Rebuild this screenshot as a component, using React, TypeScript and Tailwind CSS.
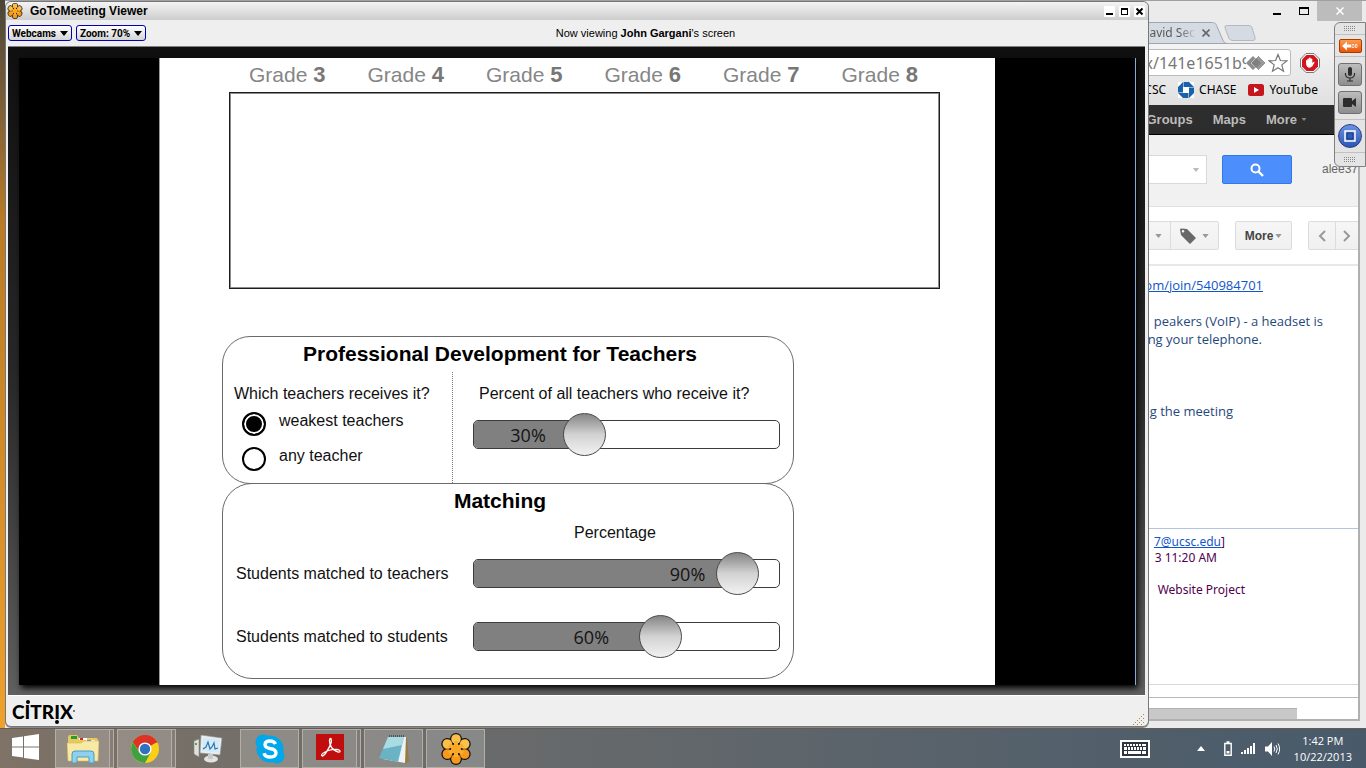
import React from 'react';

const body = 'font-["Liberation_Sans",Arial,sans-serif]';

function Flower({ className }: { className: string }) {
  const petals = [0, 60, 120, 180, 240, 300];
  return (
    <svg viewBox="-16 -16 32 32" className={className} aria-hidden="true">
      {petals.map((a) => (
        <g key={a} transform={`rotate(${a})`}>
          <circle cx="0" cy="-10" r="6" fill="#15110c" />
          <path d="M-4 -9h8v9h-8z" fill="#15110c" />
        </g>
      ))}
      {petals.map((a) => (
        <g key={a} transform={`rotate(${a})`}>
          <circle cx="0" cy="-10" r="4.800" fill={a > 60 && a < 300 ? '#f7991c' : '#fbc04a'} />
          <path d="M-2 -8h4v5h-4z" fill="#f9ac30" />
        </g>
      ))}
      <circle r="4.800" fill="#f8a826" />
    </svg>
  );
}

function Caret({ className }: { className: string }) {
  return (
    <svg viewBox="0 0 8 5" className={className} aria-hidden="true">
      <path d="M0 0h8L4 5z" fill="currentColor" />
    </svg>
  );
}

function Slider({ label, value, fill, fillClass }: { label: string; value: number; fill: number; fillClass: string }) {
  return (
    <div className="relative h-[29px] w-[307px] shrink-0 rounded-[5px] border border-[#3c3c3c] bg-white">
      <div
        className={`flex h-full items-center justify-end rounded-l-[4px] bg-[#808080] font-["Open_Sans",sans-serif] text-[18px] leading-none text-[#141414] ${fillClass}`}
        style={{ width: `${fill}%` }}
      >
        {value}%
      </div>
      <input
        type="range"
        aria-label={label}
        defaultValue={value}
        className="absolute -top-[8px] -right-[5px] left-[12px] h-[43px] appearance-none bg-transparent [&::-webkit-slider-thumb]:h-[43px] [&::-webkit-slider-thumb]:w-[43px] [&::-webkit-slider-thumb]:appearance-none [&::-webkit-slider-thumb]:rounded-full [&::-webkit-slider-thumb]:border [&::-webkit-slider-thumb]:border-[#4a4a4a] [&::-webkit-slider-thumb]:bg-linear-to-b [&::-webkit-slider-thumb]:from-[#868686] [&::-webkit-slider-thumb]:via-[#d2d2d2] [&::-webkit-slider-thumb]:to-[#f2f2f2]"
      />
    </div>
  );
}

function Radio({ label, checked }: { label: string; checked?: boolean }) {
  return (
    <label className="flex h-[35px] items-start gap-[13px]">
      <input
        type="radio"
        name="teachers"
        defaultChecked={checked}
        className="mt-[3px] h-6 w-6 appearance-none rounded-full border-2 border-black bg-white checked:bg-black checked:shadow-[inset_0_0_0_2px_white]"
      />
      <span className="leading-[24px]">{label}</span>
    </label>
  );
}

function Simulation() {
  return (
    <main className="h-full w-[836px] overflow-hidden border-l border-[#999] bg-white text-[16px] text-[#111]">
      <div className="ml-[69px] w-[711px]">
        <div className="grid h-[34px] grid-cols-6 text-[21px] leading-[34px] text-[#868686]">
          {[3, 4, 5, 6, 7, 8].map((n) => (
            <span key={n} className="pl-5 whitespace-nowrap">
              Grade <b className="text-[22px] text-[#777]">{n}</b>
            </span>
          ))}
        </div>
        <div className="h-[197px] border border-[#1c1c1c] shadow-[inset_0_0_0_1px_#8c8c8c]" />
      </div>
      <div className="mt-[47px] ml-[62px] w-[572px]">
        <section className="h-[148px] rounded-[28px] border border-[#6a6a6a]">
          <h2 className="h-[35px] pr-4 text-center text-[21px] leading-[34px] font-bold text-black">
            Professional Development for Teachers
          </h2>
          <div className="flex">
            <div className="h-[111px] w-[230px] border-r border-dotted border-[#777] pl-[11px]">
              <fieldset>
                <legend className="h-[37px] pt-[10px] leading-[24px]">Which teachers receives it?</legend>
                <div className="pl-2">
                  <Radio label="weakest teachers" checked />
                  <Radio label="any teacher" />
                </div>
              </fieldset>
            </div>
            <div className="pl-5">
              <p className="h-[48px] pt-[10px] pl-[6px] leading-[24px]">Percent of all teachers who receive it?</p>
              <Slider label="Percent of all teachers who receive it?" value={30} fill={36} fillClass="pr-[38px]" />
            </div>
          </div>
        </section>
        <section className="-mt-px h-[196px] rounded-[30px] border border-[#6a6a6a] pl-[13px]">
          <h2 className="h-[34px] pr-[29px] text-center text-[21px] leading-[34px] font-bold text-black">Matching</h2>
          <p className="h-[41px] pl-[338px] leading-[30px]">Percentage</p>
          <div className="flex flex-col gap-[34px]">
            <div className="flex items-center">
              <span className="w-[237px]">Students matched to teachers</span>
              <Slider label="Students matched to teachers" value={90} fill={86} fillClass="pr-[31px]" />
            </div>
            <div className="flex items-center">
              <span className="w-[237px]">Students matched to students</span>
              <Slider label="Students matched to students" value={60} fill={61} fillClass="pr-[51px]" />
            </div>
          </div>
        </section>
      </div>
    </main>
  );
}

const toolButton =
  'flex h-4 items-center gap-[4px] rounded-[3px] border border-[#0000b4] bg-linear-to-b from-white to-[#d4d4d4] px-[3px] font-[Roboto,sans-serif] text-[10px] font-bold';
const captionButton = 'flex h-[11px] w-[11px] items-center justify-center rounded-[1px] bg-white';

function MeetingWindow() {
  return (
    <div className="absolute top-px right-[217px] bottom-px left-[5px] flex flex-col rounded-md border border-[#777] bg-[#efefef] text-black shadow-[0_1px_0_#888]">
      <header className="flex h-[18px] items-center rounded-t-md bg-linear-to-b from-[#f4f4f4] to-[#cdcdcd] pr-[3px] pl-px">
        <Flower className="mr-[7px] h-4 w-4" />
        <h1 className="flex-1 text-[12px] font-bold">GoToMeeting Viewer</h1>
        <div className="flex gap-1">
          <button aria-label="Minimize" className={captionButton}>
            <svg viewBox="0 0 11 11" className="h-[11px] w-[11px]"><path d="M2 7h7v2H2z" /></svg>
          </button>
          <button aria-label="Maximize" className={captionButton}>
            <svg viewBox="0 0 11 11" className="h-[11px] w-[11px]"><path d="M2 2h7v7H2zM3 4v4h5V4z" fillRule="evenodd" /></svg>
          </button>
          <button aria-label="Close" className={captionButton}>
            <svg viewBox="0 0 11 11" className="h-[11px] w-[11px]"><path d="M2.500 2.500l6 6M8.500 2.500l-6 6" stroke="#000" strokeWidth="2" /></svg>
          </button>
        </div>
      </header>
      <div className="flex h-[26px] items-center px-[2px]">
        <div className="flex flex-4 gap-1">
          <button className={toolButton}>Webcams <Caret className="h-[5px] w-[8px]" /></button>
          <button className={toolButton}>Zoom: 70% <Caret className="h-[5px] w-[8px]" /></button>
        </div>
        <p className="text-[11px]">Now viewing <b>John Gargani</b>'s screen</p>
        <div className="flex-3" />
      </div>
      <div className="mr-[3px] ml-[2px] min-h-0 flex-1 border-t border-b border-t-[#808080] border-b-white bg-linear-to-b from-[#101010] via-[#282828] to-[#606060] pt-[11px] pr-[9px] pb-[10px] pl-[11px]">
        <div className="flex h-full justify-center border-r border-[#86a9dc] bg-black shadow-[2px_3px_6px_black]">
          <Simulation />
        </div>
      </div>
      <footer className="flex h-[30px] items-center justify-between pl-[6px]">
        <p className="flex items-baseline font-[Lato,sans-serif] text-[19px] leading-none font-black" aria-label="Citrix">
          C
          <span className="relative">I<i className="absolute -top-[2px] left-px h-1 w-1 rounded-full bg-black" /></span>
          TR
          <span className="relative">I<i className="absolute -bottom-[3px] left-px h-1 w-1 rounded-full bg-black" /></span>
          X
          <i className="mb-[9px] h-[2px] w-[2px] self-end rounded-full bg-[#555]" />
        </p>
        <svg viewBox="0 0 12 12" className="mr-[3px] h-3 w-3 self-end" fill="#b08a3c" aria-hidden="true">
          {[[10, 0], [8, 2], [6, 4], [10, 4], [4, 6], [8, 6], [2, 8], [6, 8], [10, 8], [0, 10], [4, 10], [8, 10]].map(([x, y]) => (
            <rect key={`${x}-${y}`} x={x} y={y} width="1" height="1" />
          ))}
        </svg>
      </footer>
    </div>
  );
}

const gmailButton = 'flex h-[29px] items-center justify-center border border-[#dcdcdc] bg-linear-to-b from-[#f6f6f6] to-[#f0f0f0] text-[#999]';

function Browser() {
  return (
    <div className='absolute top-0 right-0 bottom-0 left-[5px] flex flex-col bg-[#ebebeb] font-["Noto_Sans",sans-serif] text-[12px]'>
      <div className="flex h-[22px] items-start justify-end border-t border-[#a0a0a0] pr-1 text-[#222]">
        <button aria-label="Minimize" className="flex h-5 w-7 items-center justify-center"><svg viewBox="0 0 8 10" className="h-[10px] w-2"><path d="M0 7h8v2H0z" /></svg></button>
        <button aria-label="Maximize" className="flex h-5 w-[26px] items-center justify-center"><svg viewBox="0 0 10 8" className="h-2 w-[10px]"><path d="M0 0h10v8H0zM1 2v5h8V2z" fillRule="evenodd" /></svg></button>
        <button aria-label="Close" className="flex h-5 w-[45px] items-center justify-center bg-[#bcbcbc]"><svg viewBox="0 0 8 8" className="h-2 w-2"><path d="M.5.5l7 7M7.500.5l-7 7" stroke="#fff" strokeWidth="1.500" /></svg></button>
      </div>
      <div className="flex h-[22px] items-start justify-end border-b border-[#a9adb2] pr-[110px]">
        <div className="relative flex h-[22px] items-center gap-[7px] pr-[14px]">
          <svg viewBox="0 0 140 22" preserveAspectRatio="none" className="absolute top-0 -right-1 h-[22px] w-[140px]" aria-hidden="true"><path d="M0 .5h123c4 0 5 1 6 4l6 14q1 3 4 3H0z" fill="#d5dbe3" stroke="#a0a6ad" /></svg>
          <span className="relative bg-linear-to-r from-[#555] from-70% to-[#c8ced6] bg-clip-text text-transparent">David Sec</span>
          <svg viewBox="0 0 8 8" className="relative h-2 w-2"><path d="M.5.5l7 7M7.500.5l-7 7" stroke="#666" strokeWidth="1.600" /></svg>
        </div>
        <svg viewBox="0 0 32 16" className="mt-[3px] h-4 w-8" aria-hidden="true"><path d="M3 .5h22q2 0 3 2l3 10q1 3-2 3H9q-3 0-4-2L1 3Q0 .5 3 .5z" fill="#d5dbe3" stroke="#b4b9c0" /></svg>
      </div>
      <div className="h-[61px] bg-linear-to-b from-[#f3f3f3] to-[#e0e0e0] pt-[5px]">
        <div className="flex items-center">
          <div className="flex h-[27px] flex-1 items-center justify-end rounded-[3px] border border-[#bbb] bg-white pr-[2px]">
            <span className="text-[16px] leading-none text-[#777]">x/141e1651b9</span>
            <svg viewBox="0 0 20 16" className="-ml-[5px] h-4 w-5"><path d="M-1 -1h22v18h-22z" fill="#fff" /><path d="M7 1l7 7-7 7-7-7z" fill="#8c8c8c" /><path d="M12.500 .5l7.500 7.500-7.500 7.500-7.500-7.500z" fill="#999" stroke="#fff" /><path d="M10 3l5 5-5 5-5-5z" fill="#808080" /></svg>
            <svg viewBox="0 0 20 20" className="ml-[2px] h-5 w-5"><path d="M10 1.500l2.400 6 6.400.4-5 4 1.700 6.300-5.500-3.500-5.500 3.500 1.700-6.300-5-4 6.400-.4z" fill="#fff" stroke="#777" strokeWidth="1.200" /></svg>
          </div>
          <svg viewBox="0 0 20 20" className="mr-[46px] ml-[9px] h-5 w-5" aria-label="AdBlock">
            <path d="M6 .5h8L19.500 6v8L14 19.500H6L.5 14V6z" fill="#fff" stroke="#777" />
            <path d="M6.500 2h7L18 6.500v7L13.500 18h-7L2 13.500v-7z" fill="#d3141c" />
            <path d="M6 10V7.500q.7-1 1.400 0V6q.8-1.200 1.600 0V5q.8-1.200 1.700 0v1q.8-1.200 1.600 0v4l1-1q1.500-.5 1.200.6l-2.300 4q-2.700 2-5 .1Q6 13 6 10z" fill="#fff" />
          </svg>
        </div>
        <div className="flex h-7 items-center justify-end pr-12 text-[12px] text-black">
          <span>UCSC</span>
          <svg viewBox="0 0 16 16" className="ml-3 h-4 w-4" aria-hidden="true"><path d="M0 0h16v16H0z" fill="#fff" /><path d="M5.500 0H11l5 5H5.500zM16 5.500V11l-5 5V5.500zM10.500 16H5l-5-5h10.500zM0 10.500V5l5-5v10.500z" fill="#1a60aa" /><path d="M5.500 5.500h5v5h-5z" fill="#fff" /></svg>
          <span className="ml-[5px]">CHASE</span>
          <svg viewBox="0 0 16 12" className="ml-3 h-3 w-4" aria-hidden="true"><rect width="16" height="12" rx="2.500" fill="#c4161c" /><path d="M6 3l5 3-5 3z" fill="#fff" /></svg>
          <span className="ml-[5px]">YouTube</span>
        </div>
      </div>
      <div className="mr-[6px] mb-[7px] flex min-h-0 flex-1 flex-col border-r-2 border-b-2 border-[#b0b0b0] bg-white">
        <nav className='flex h-[30px] shrink-0 items-center justify-end gap-5 border-b border-black bg-[#2d2d2d] pr-[51px] font-["Liberation_Sans",sans-serif] text-[13px] font-bold text-[#bbb]'>
          <a href="#groups">Groups</a>
          <a href="#maps">Maps</a>
          <a href="#more" className="flex items-center gap-1">More <Caret className="h-[3px] w-[6px] text-[#888]" /></a>
        </nav>
        <div className='flex h-[72px] shrink-0 items-start border-b border-[#e2e2e2] bg-[#f1f1f1] pt-[20px] font-["Liberation_Sans",sans-serif]'>
          <div className="flex h-[29px] flex-1 items-center justify-end border border-[#d9d9d9] bg-white pr-[6px] text-[#bbb]"><Caret className="h-1 w-2" /></div>
          <button aria-label="Search" className="mr-[30px] ml-[15px] flex h-[29px] w-[70px] items-center justify-center rounded-[2px] border border-[#3079ed] bg-[#4c8efb]">
            <svg viewBox="0 0 14 14" className="h-[14px] w-[14px]" fill="none" stroke="#fff"><circle cx="5.500" cy="5.500" r="4" strokeWidth="2" /><path d="M8.500 8.500l4.500 4.500" strokeWidth="2.400" /></svg>
          </button>
          <span className="w-9 pt-[5px] text-[12px] text-[#666]">alee37</span>
        </div>
        <div className='flex h-[59px] shrink-0 items-center justify-end border-b-2 border-[#e8e8e8] font-["Liberation_Sans",sans-serif]'>
          <button aria-label="Move to" className={`${gmailButton} w-[60px] justify-end pr-[8px]`}><Caret className="h-1 w-[7px]" /></button>
          <button aria-label="Labels" className={`${gmailButton} -ml-px w-[49px] gap-[6px] rounded-r-[2px]`}>
            <svg viewBox="0 0 16 16" className="h-4 w-4"><path d="M0 1.500Q0 .5 1.500.5L7 1l9 9-6 6-9-9zM3 2a1.300 1.300 0 1 0 .1 2.600A1.300 1.300 0 0 0 3 2z" fill="#686868" fillRule="evenodd" /></svg>
            <Caret className="h-1 w-[7px]" />
          </button>
          <button className={`${gmailButton} mr-4 ml-4 w-[57px] gap-[2px] rounded-[2px] text-[12px] font-bold`}><span className="text-[#444]">More</span><Caret className="h-1 w-[7px]" /></button>
          <button aria-label="Newer" className={`${gmailButton} w-[28px] rounded-l-[2px]`}><svg viewBox="0 0 8 12" className="h-3 w-2"><path d="M7 1L2 6l5 5" fill="none" stroke="#999" strokeWidth="2" /></svg></button>
          <button aria-label="Older" className={`${gmailButton} -ml-px w-[23px] border-r-0`}><svg viewBox="0 0 8 12" className="h-3 w-2"><path d="M1 1l5 5-5 5" fill="none" stroke="#999" strokeWidth="2" /></svg></button>
        </div>
        <article className='flex-1 font-["Open_Sans",sans-serif] text-[13px] leading-[18px] text-[#1f497d]'>
          <div className="flex flex-col pt-[10px]">
            <p className="pr-[95px] text-right"><a href="#join" className="text-[#15c] underline">com/join/540984701</a></p>
            <p className="mt-[18px] pr-[35px] text-right whitespace-nowrap">peakers (VoIP) - a headset is</p>
            <p className="pr-[96px] text-right">using your telephone.</p>
            <p className="mt-[54px] pr-[125px] text-right">during the meeting</p>
          </div>
          <div className='mt-[108px] border-t border-[#b5c4df] pt-[5px] font-["Noto_Sans",sans-serif] text-[12px] leading-4 text-[#500050]'>
            <p className="pr-[133px] text-right"><a href="#mail" className="text-[#15c] underline">7@ucsc.edu</a>]</p>
            <p className="pr-[141px] text-right">3 11:20 AM</p>
            <p className="mt-4 pr-[113px] text-right">Website Project</p>
          </div>
        </article>
        <div className="h-[13px] border-t border-[#d8d8d8]" />
        <div className="h-[11px] border-t border-[#b8b8b8]" />
        <div className="mr-[61px] h-[11px] border-t border-[#b0b0b0] bg-[#c8c8c8]" />
      </div>
    </div>
  );
}

function Grip() {
  return (
    <svg viewBox="0 0 12 5" className="h-[5px] w-3" fill="#888" aria-hidden="true">
      {[0, 2, 4, 6, 8, 10].map((x) => <path key={x} d={`M${x} 0h1v1h-1zM${x} 2h1v1h-1zM${x} 4h1v1h-1z`} />)}
    </svg>
  );
}

const padButton = 'flex h-[23px] w-6 items-center justify-center rounded-[3px] border border-[#707070] bg-linear-to-b from-[#bdbdbd] to-[#8e8e8e]';

function ControlPad() {
  return (
    <div className="absolute top-[22px] right-0 flex w-8 flex-col items-center rounded-l-md border border-[#808080] bg-[#e4e4e4]">
      <div className="flex h-[11px] items-center"><Grip /></div>
      <div className="flex h-[23px] w-full items-center justify-center border-t border-b border-[#c0c0c0]">
        <button aria-label="Hide panel" className="flex h-[14px] w-[23px] items-center justify-center rounded-[2px] border border-[#a83c00] bg-linear-to-b from-[#ff9c4a] to-[#e85400]">
          <svg viewBox="0 0 16 10" className="h-[10px] w-4"><path d="M0 5l5-4.500v3h4v3H5v3z" fill="#fff" /><path d="M10 3.500h2v3h-2zM13.500 3.500h1.500v3h-1.500z" fill="none" stroke="#fff" strokeWidth=".7" /></svg>
        </button>
      </div>
      <div className="flex h-[62px] flex-col items-center justify-center gap-[5px]">
        <button aria-label="Microphone" className={padButton}>
          <svg viewBox="0 0 12 15" className="h-[15px] w-3"><rect x="4" y="0" width="4" height="9" rx="2" fill="#2c2c2c" /><path d="M1.500 6v1.500Q2 11 6 11t4.500-3.500V6M6 11v3M3 14h6" fill="none" stroke="#2c2c2c" strokeWidth="1.200" /></svg>
        </button>
        <button aria-label="Webcam" className={padButton}>
          <svg viewBox="0 0 14 9" className="h-[9px] w-[14px]"><path d="M0 1q0-1 1-1h7q1 0 1 1v2l4-3v9L9 6v2q0 1-1 1H1Q0 9 0 8z" fill="#2c2c2c" /></svg>
        </button>
      </div>
      <div className="flex h-[34px] w-full items-center justify-center border-t border-b border-[#c0c0c0]">
        <button aria-label="Screen" className="flex h-6 w-6 items-center justify-center rounded-full border border-[#2a3f80] bg-linear-to-b from-[#6d92e0] to-[#2a56b4]">
          <svg viewBox="0 0 12 12" className="h-3 w-3"><path d="M1 1h10v10H1z" fill="none" stroke="#fff" strokeWidth="1.500" /><path d="M3 3h6v6H3z" fill="#2f5cb5" stroke="#1a3a80" /></svg>
        </button>
      </div>
      <div className="flex h-[13px] items-center"><Grip /></div>
    </div>
  );
}

const task = 'flex h-[39px] items-center justify-center border border-[#b5aea4] bg-white/20';

function Stack() {
  return <span className="h-[39px] w-1 border border-l-0 border-[#b5aea4] bg-white/10" />;
}

function Taskbar() {
  return (
    <footer className="flex h-10 items-center border-t border-[#625c55] bg-linear-to-r from-[#7f7266] via-[#6c6c6b] via-30% to-[#485a6a] text-white">
      <button aria-label="Start" className="flex h-full w-[55px] items-center pb-1 pl-3">
        <svg viewBox="0 0 27 26" className="h-[26px] w-[27px]" fill="#fff"><path d="M0 4l11-1.600V12.500H0zM12 2.200L27 0v12.500H12zM0 13.500h11v10L0 22zM12 13.500h15V26l-15-2z" /></svg>
      </button>
      <button aria-label="File Explorer" className={`${task} w-[55px]`}>
        <svg viewBox="0 0 32 30" className="h-[30px] w-8">
          <path d="M1 3q0-2 2-2h7l2 3h17q2 0 2 2v20H1z" fill="#e9c860" />
          <path d="M4 2h6v3H4z" fill="#20a030" /><path d="M12 4h8v2h-8z" fill="#fff" /><path d="M13 4h3v2h-3z" fill="#d03020" /><path d="M19 6h9v2h-9z" fill="#fff" /><path d="M20 6h4v2h-4z" fill="#2a80d8" />
          <path d="M0 9h14l3-2h15l-1 20H1z" fill="#f8e9a4" stroke="#d8b858" strokeWidth=".6" />
          <path d="M5 29v-9q0-3 3-3h16q3 0 3 3v9h-5v-6H10v6z" fill="#8fd0ee" stroke="#4a9cc8" />
        </svg>
      </button>
      <Stack />
      <button aria-label="Chrome" className={`${task} ml-[3px] w-[55px]`}>
        <svg viewBox="-14 -14 28 28" className="h-7 w-7">
          <circle r="14" fill="#fbcf16" />
          <path d="M0 0L-12.100 -7A14 14 0 0 1 12.100 -7z" fill="#dd3326" />
          <path d="M0 -6.500h12.400A14 14 0 0 0 -12.100 -7L-5.500 3z" fill="#dd3326" />
          <path d="M-12.100 -7A14 14 0 0 0 0 14L5.700 3.500 0 0-5.600 3.300z" fill="#3fa142" />
          <circle r="6.600" fill="#fff" /><circle r="5.200" fill="#2f72c4" />
        </svg>
      </button>
      <Stack />
      <button aria-label="Task monitor" className="flex h-full w-[64px] items-center justify-center">
        <svg viewBox="0 0 30 28" className="h-7 w-[30px]">
          <path d="M1 6l5-2v18l-5-3z" fill="#e0e0dc" stroke="#888" strokeWidth=".6" /><path d="M2 8h2v2H2z" fill="#49b030" />
          <path d="M8 0l21 3-2 17-20-2z" fill="#eceff0" stroke="#909498" strokeWidth=".7" /><path d="M10 2l17 2.400-1.600 13.400L9 16z" fill="#d5e9f6" />
          <path d="M10 14l3-2 2-5 2 7 2-2 2-4 1 6 3-1" fill="none" stroke="#2678b8" strokeWidth="1.200" />
          <ellipse cx="18" cy="24" rx="7" ry="3.500" fill="#e2e4e4" /><path d="M15 19h5v5h-5z" fill="#c8caca" />
        </svg>
      </button>
      <button aria-label="Skype" className={`${task} w-[59px]`}>
        <svg viewBox="0 0 30 30" className="h-[30px] w-[30px]"><circle cx="15" cy="15" r="13.500" fill="#00a8ea" /><circle cx="8" cy="8" r="7.500" fill="#00a8ea" /><circle cx="22" cy="22" r="7.500" fill="#00a8ea" /><path d="M20.500 10q-1.500-3-5.500-3-5 0-5 3.700 0 2.700 5 3.800 6 1 6 4.500 0 4-6 4-5 0-6-3.800" fill="none" stroke="#fff" strokeWidth="3.400" /></svg>
      </button>
      <button aria-label="Acrobat" className={`${task} ml-[3px] w-[55px]`}>
        <svg viewBox="0 0 28 26" className="mb-1 h-[26px] w-7"><path d="M0 0h28v26H0z" fill="#c00d0d" /><path d="M5.500 21.500q-.5-2 7-5 4.500-1.400 8.500-1 3.500.6 3 2t-4-.4q-6-3-6.500-10 0-2.600 1-2.600t.8 3.500Q14 13 9 20q-2.500 3-3.500 1.500z" fill="none" stroke="#fff" strokeWidth="1.300" /></svg>
      </button>
      <Stack />
      <button aria-label="Notepad" className={`${task} ml-[3px] w-[59px]`}>
        <svg viewBox="0 0 32 30" className="h-[30px] w-8"><path d="M11 3l18 1 2 23-4 3z" fill="#9a7a42" /><path d="M12 3h16l-1 26-22-4z" fill="#eef3f4" /><path d="M10 3h16l-6 25-19-4z" fill="#69b3c4" /><path d="M10 3h16l-2 8L5 15z" fill="#a9dbe3" /><path d="M11 2h16" stroke="#555" strokeWidth="2" strokeDasharray="1 1" /></svg>
      </button>
      <button aria-label="GoToMeeting" className={`${task} ml-[3px] w-[59px]`}><Flower className="h-8 w-8" /></button>
      <div className="flex-1" />
      <button aria-label="Touch keyboard">
        <svg viewBox="0 0 30 18" className="h-[18px] w-[30px]"><path d="M1 1h28v16H1z" fill="#2c3640" stroke="#fff" strokeWidth="2" /><path d="M4 4h2v2H4zM7 4h2v2H7zM10 4h2v2h-2zM13 4h2v2h-2zM16 4h2v2h-2zM19 4h2v2h-2zM22 4h4v2h-4zM4 7h3v3H4zM8 7h2v3H8zM11 7h2v3h-2zM14 7h2v3h-2zM17 7h2v3h-2zM20 7h2v3h-2zM23 7h3v3h-3zM4 11h3v3H4zM8 11h13v3H8zM22 11h4v3h-4z" fill="#fff" /></svg>
      </button>
      <button aria-label="Show hidden icons" className="ml-[47px]"><svg viewBox="0 0 8 5" className="h-[5px] w-2"><path d="M4 0l4 5H0z" fill="#fff" /></svg></button>
      <div className="ml-[19px] flex items-center gap-[9px]">
        <svg viewBox="0 0 8 15" className="h-[15px] w-2" aria-label="Battery"><path d="M.8 2.500h6.400v11.700H.8zM2.500 1h3" fill="none" stroke="#fff" strokeWidth="1.400" /><path d="M2.500 10h3v2.500h-3z" fill="#fff" /></svg>
        <svg viewBox="0 0 15 11" className="h-[11px] w-[15px]" fill="#fff" aria-label="Network"><path d="M0 9h2v2H0zM3 7h2v4H3zM6 5h2v6H6zM9 3h2v8H9zM12 0h2v11h-2z" /></svg>
        <svg viewBox="0 0 15 14" className="h-[14px] w-[15px]" aria-label="Volume"><path d="M0 4.500h3L7 0v14L3 9.500H0z" fill="#fff" /><path d="M9 4.500q1.600 2.500 0 5M11 3q2.600 4 0 8M13 1.500q3.300 5.500 0 11" fill="none" stroke="#fff" /></svg>
      </div>
      <div className='mr-[14px] ml-[14px] pt-px text-center font-["Open_Sans",sans-serif] text-[11px] leading-4'>
        <p>1:42 PM</p>
        <p>10/22/2013</p>
      </div>
    </footer>
  );
}

export default function App() {
  return (
    <div className={`flex h-screen flex-col overflow-hidden ${body}`}>
      <div className="relative min-h-0 flex-1 bg-linear-to-b from-[#4a4538] via-[#b87a24] via-30% to-[#f0a12c]">
        <Browser />
        <MeetingWindow />
        <ControlPad />
      </div>
      <Taskbar />
    </div>
  );
}
